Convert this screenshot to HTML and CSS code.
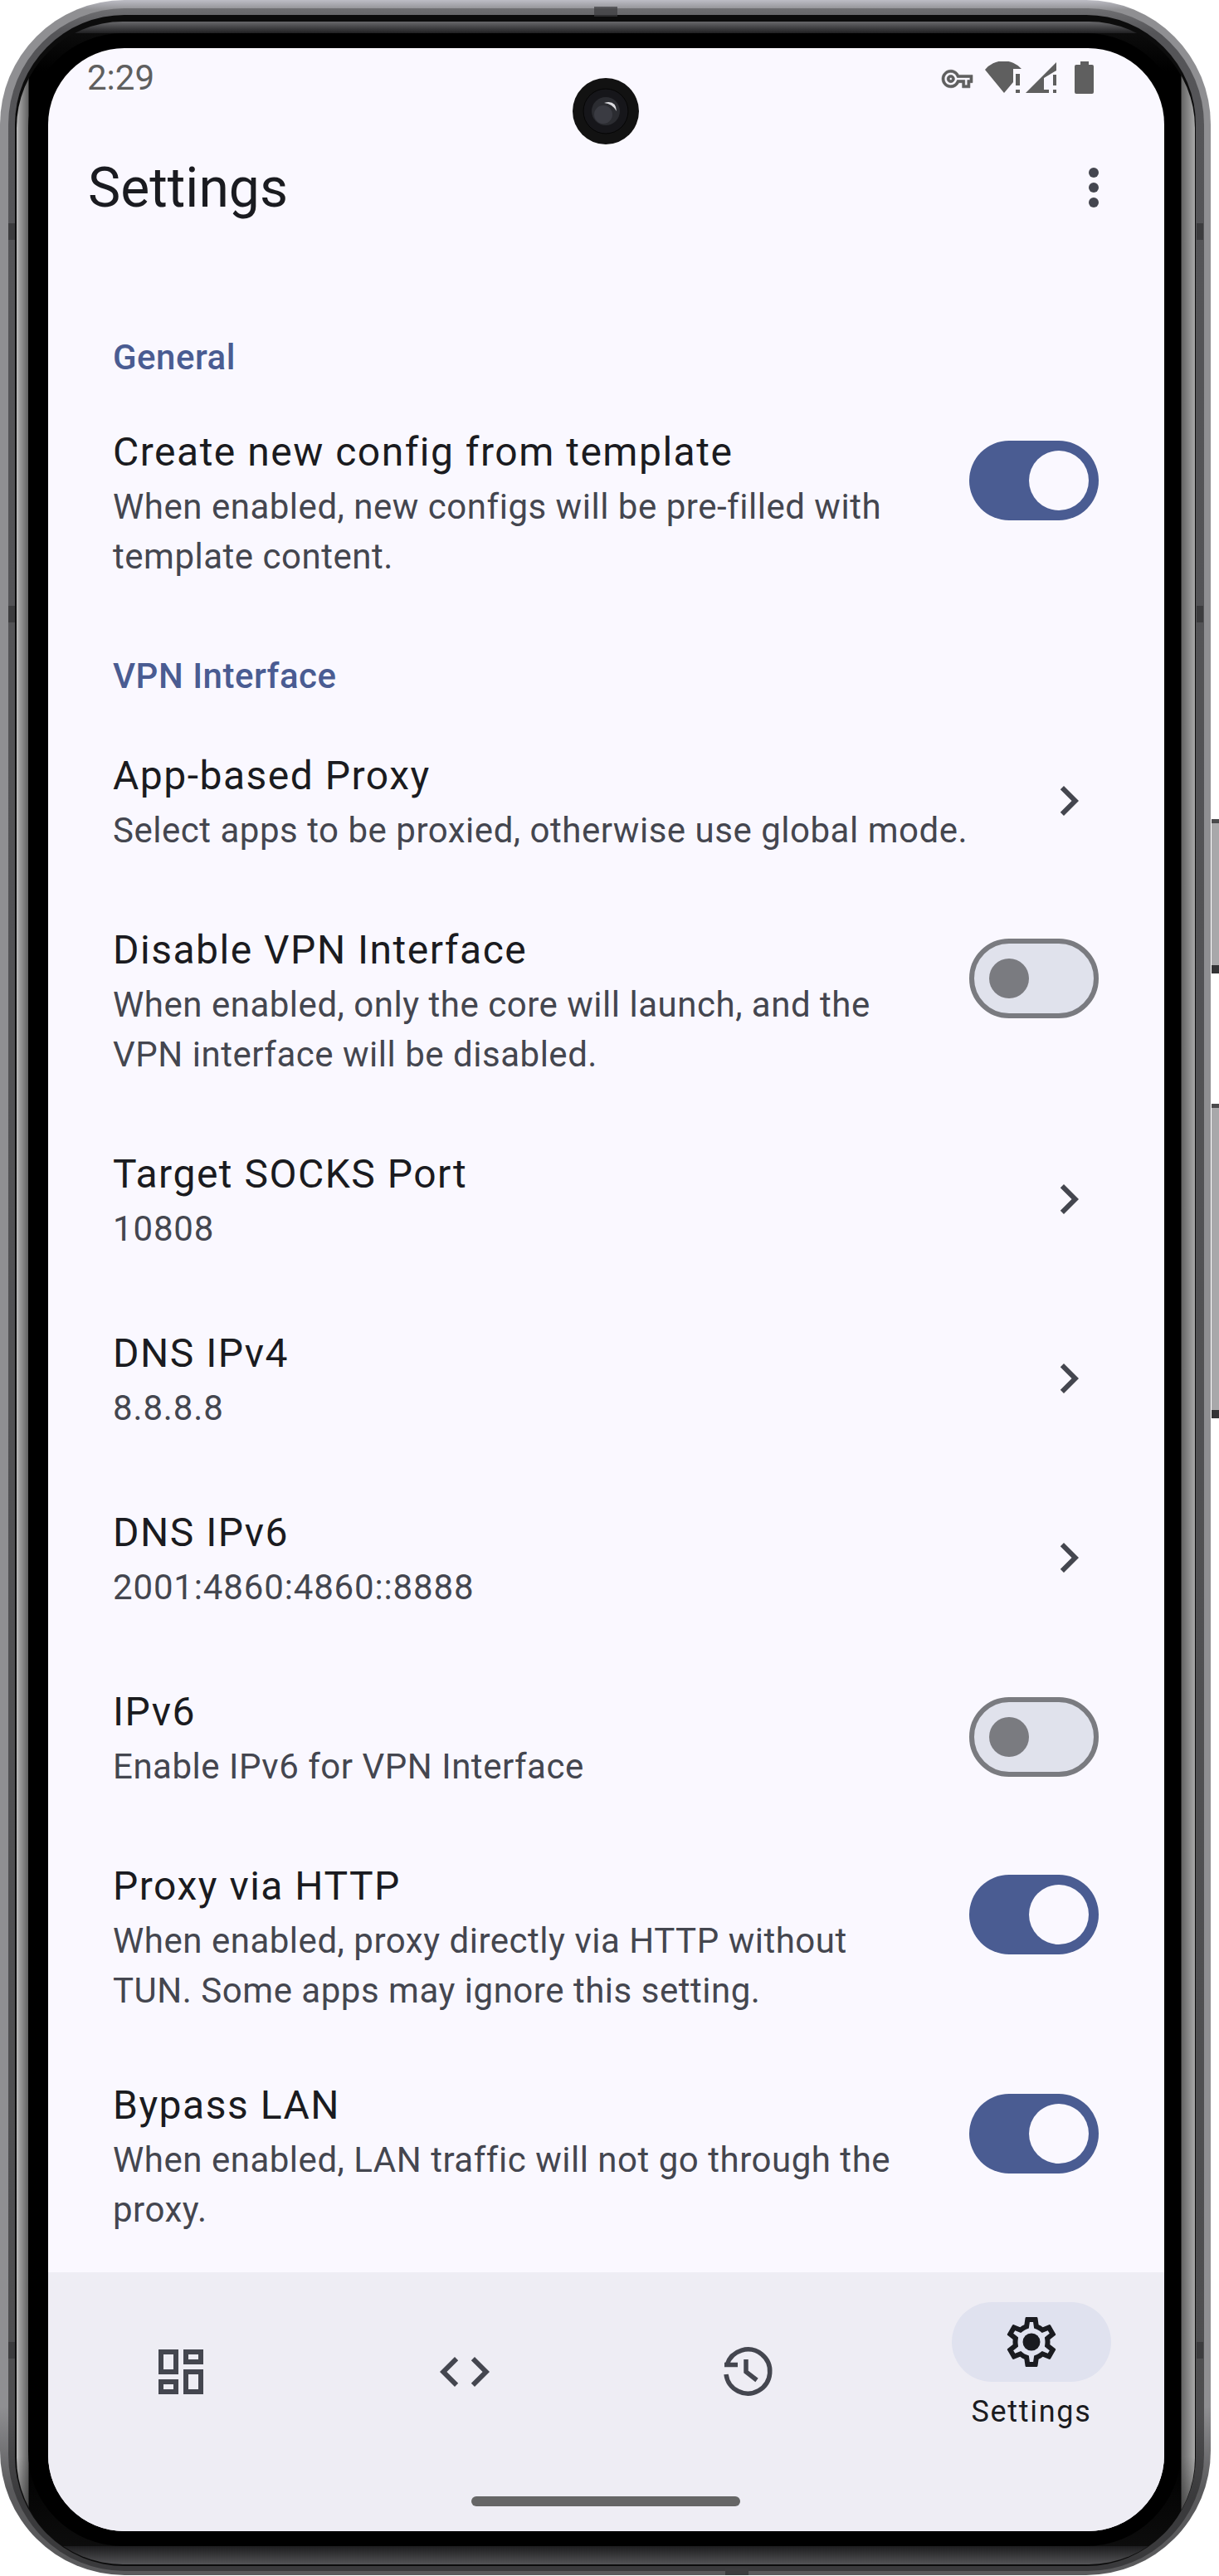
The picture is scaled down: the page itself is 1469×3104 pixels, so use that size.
FILE: index.html
```html
<!DOCTYPE html>
<html lang="en">
<head>
    <meta charset="UTF-8">
    <meta name="viewport" content="width=device-width, initial-scale=1.0">
    <title>Settings</title>
    <link rel="stylesheet" href="styles.css">
</head>
<body>
    <div class="side-button side-button-power"></div>
    <div class="side-button side-button-volume"></div>
    <div class="phone">
        <div class="ring-b">
            <div class="ring-c">
                <div class="ring-d">
                    <div class="bezel">
                        <div class="screen">
                            <svg class="camera" viewBox="0 0 80 80">
                                <circle cx="40" cy="40" r="40" fill="#121212"/>
                                <circle cx="40" cy="40" r="27" fill="#16161a" stroke="#050505" stroke-width="1"/>
                                <circle cx="40" cy="40" r="17" fill="#2b2c31"/>
                                <circle cx="37" cy="44" r="11" fill="#3a3b42"/>
                                <path d="M38 30Q52 26 53 40 48 31 38 30Z" fill="#dcdce0"/>
                            </svg>

                            <div class="status-bar">
                                <span class="status-time">2:29</span>
                                <div class="status-icons">
                                    <svg class="icon-key" viewBox="0 5 24 14"><path d="M22 19h-6v-4h-2.68c-1.14 2.42-3.6 4-6.32 4-3.86 0-7-3.14-7-7s3.14-7 7-7c2.72 0 5.17 1.58 6.32 4H24v6h-2v4zm-4-2h2v-4h2v-2H11.94l-.23-.67C11.01 8.34 9.11 7 7 7c-2.76 0-5 2.24-5 5s2.24 5 5 5c2.11 0 4.01-1.34 4.71-3.33l.23-.67H18v4zM7 15c-1.65 0-3-1.35-3-3s1.35-3 3-3 3 1.35 3 3-1.35 3-3 3zm0-4c-.55 0-1 .45-1 1s.45 1 1 1 1-.45 1-1-.45-1-1-1z"/></svg>
                                    <svg class="icon-wifi" viewBox="0 0 44 38"><path d="M0 10A29 29 0 0 1 44 9H34V25L23 38Z"/><path d="M37 15h5v14h-5zM37 34h5v4h-5z"/></svg>
                                    <svg class="icon-cell" viewBox="0 0 38 37"><path d="M0 37 37 0V10L22 19V33H28V37Z"/><path d="M33 15h4v13h-4zM33 33h4v4h-4z"/></svg>
                                    <svg class="icon-battery" viewBox="0 0 23 39"><path d="M7 0h10v4h4q2 0 2 2v31q0 2-2 2H2q-2 0-2-2V6q0-2 2-2h5z"/></svg>
                                </div>
                            </div>

                            <div class="top-bar">
                                <h1 class="top-title">Settings</h1>
                                <svg class="icon icon-more" viewBox="0 0 24 24"><circle cx="12" cy="6" r="2"/><circle cx="12" cy="12" r="2"/><circle cx="12" cy="18" r="2"/></svg>
                            </div>

                            <div class="settings-list">
                                <div class="section-label">General</div>
                                <div class="row row-three">
                                    <div class="row-text">
                                        <div class="row-title">Create new config from template</div>
                                        <div class="row-sub">When enabled, new configs will be pre-filled with template content.</div>
                                    </div>
                                    <div class="switch switch-on"><span class="thumb"></span></div>
                                </div>

                                <div class="section-label">VPN Interface</div>
                                <div class="row row-two">
                                    <div class="row-text">
                                        <div class="row-title">App-based Proxy</div>
                                        <div class="row-sub">Select apps to be proxied, otherwise use global mode.</div>
                                    </div>
                                    <svg class="icon" viewBox="0 0 24 24"><path d="M10 6L8.59 7.41 13.17 12l-4.58 4.59L10 18l6-6z"/></svg>
                                </div>
                                <div class="row row-three">
                                    <div class="row-text">
                                        <div class="row-title">Disable VPN Interface</div>
                                        <div class="row-sub">When enabled, only the core will launch, and the VPN interface will be disabled.</div>
                                    </div>
                                    <div class="switch switch-off"><span class="thumb"></span></div>
                                </div>
                                <div class="row row-two">
                                    <div class="row-text">
                                        <div class="row-title">Target SOCKS Port</div>
                                        <div class="row-sub row-value">10808</div>
                                    </div>
                                    <svg class="icon" viewBox="0 0 24 24"><path d="M10 6L8.59 7.41 13.17 12l-4.58 4.59L10 18l6-6z"/></svg>
                                </div>
                                <div class="row row-two">
                                    <div class="row-text">
                                        <div class="row-title">DNS IPv4</div>
                                        <div class="row-sub row-value">8.8.8.8</div>
                                    </div>
                                    <svg class="icon" viewBox="0 0 24 24"><path d="M10 6L8.59 7.41 13.17 12l-4.58 4.59L10 18l6-6z"/></svg>
                                </div>
                                <div class="row row-two">
                                    <div class="row-text">
                                        <div class="row-title">DNS IPv6</div>
                                        <div class="row-sub row-value">2001:4860:4860::8888</div>
                                    </div>
                                    <svg class="icon" viewBox="0 0 24 24"><path d="M10 6L8.59 7.41 13.17 12l-4.58 4.59L10 18l6-6z"/></svg>
                                </div>
                                <div class="row row-two">
                                    <div class="row-text">
                                        <div class="row-title">IPv6</div>
                                        <div class="row-sub">Enable IPv6 for VPN Interface</div>
                                    </div>
                                    <div class="switch switch-off switch-center"><span class="thumb"></span></div>
                                </div>
                                <div class="row row-three">
                                    <div class="row-text">
                                        <div class="row-title">Proxy via HTTP</div>
                                        <div class="row-sub">When enabled, proxy directly via HTTP without TUN. Some apps may ignore this setting.</div>
                                    </div>
                                    <div class="switch switch-on"><span class="thumb"></span></div>
                                </div>
                                <div class="row row-three">
                                    <div class="row-text">
                                        <div class="row-title">Bypass LAN</div>
                                        <div class="row-sub">When enabled, LAN traffic will not go through the proxy.</div>
                                    </div>
                                    <div class="switch switch-on"><span class="thumb"></span></div>
                                </div>
                            </div>

                            <div class="nav-bar">
                                <div class="nav-item">
                                    <svg class="icon" viewBox="0 0 24 24"><path d="M19 5v2h-4V5h4M9 5v6H5V5h4m10 8v6h-4v-6h4M9 17v2H5v-2h4M21 3h-8v6h8V3zM11 3H3v10h8V3zm10 8h-8v10h8V11zm-10 4H3v6h8v-6z"/></svg>
                                </div>
                                <div class="nav-item">
                                    <svg class="icon" viewBox="0 0 24 24"><path d="M9.4 16.6L4.8 12l4.6-4.6L8 6l-6 6 6 6 1.4-1.4zm5.2 0l4.6-4.6-4.6-4.6L16 6l6 6-6 6-1.4-1.4z"/></svg>
                                </div>
                                <div class="nav-item">
                                    <svg class="icon-history" viewBox="0 0 72 72">
                                        <path d="M10 39A26.5 26.5 0 1 0 11 27.5"/>
                                        <path d="M8 27.5H24M34 21V36L47 46"/>
                                    </svg>
                                </div>
                                <div class="nav-item nav-item-active">
                                    <div class="nav-pill">
                                        <svg class="icon icon-gear" viewBox="0 0 24 24"><path d="M19.43 12.98c.04-.32.07-.64.07-.98 0-.34-.03-.66-.07-.98l2.11-1.65c.19-.15.24-.42.12-.64l-2-3.46c-.09-.16-.26-.25-.44-.25-.06 0-.12.01-.17.03l-2.49 1c-.52-.4-1.08-.73-1.69-.98l-.38-2.65C14.46 2.18 14.25 2 14 2h-4c-.25 0-.46.18-.49.42l-.38 2.65c-.61.25-1.17.59-1.69.98l-2.49-1c-.06-.02-.12-.03-.18-.03-.17 0-.34.09-.43.25l-2 3.46c-.13.22-.07.49.12.64l2.11 1.65c-.04.32-.07.65-.07.98 0 .33.03.66.07.98l-2.11 1.65c-.19.15-.24.42-.12.64l2 3.46c.09.16.26.25.44.25.06 0 .12-.01.17-.03l2.49-1c.52.4 1.08.73 1.69.98l.38 2.65c.03.24.24.42.49.42h4c.25 0 .46-.18.49-.42l.38-2.65c.61-.25 1.17-.59 1.69-.98l2.49 1c.06.02.12.03.18.03.17 0 .34-.09.43-.25l2-3.46c.12-.22.07-.49-.12-.64l-2.11-1.65zm-1.98-1.71c.04.31.05.52.05.73 0 .21-.02.43-.05.73l-.14 1.13.89.7 1.08.84-.7 1.21-1.27-.51-1.04-.42-.9.68c-.43.32-.84.56-1.25.73l-1.06.43-.16 1.13-.2 1.35h-1.4l-.19-1.35-.16-1.13-1.06-.43c-.43-.18-.83-.41-1.23-.71l-.91-.7-1.06.43-1.27.51-.7-1.21 1.08-.84.89-.7-.14-1.13c-.03-.31-.05-.54-.05-.74s.02-.43.05-.73l.14-1.13-.89-.7-1.08-.84.7-1.21 1.27.51 1.04.42.9-.68c.43-.32.84-.56 1.25-.73l1.06-.43.16-1.13.2-1.35h1.39l.19 1.35.16 1.13 1.06.43c.43.18.83.41 1.23.71l.91.7 1.06-.43 1.27-.51.7 1.21-1.07.85-.89.7.14 1.13z"/><circle cx="12" cy="12" r="3.5"/></svg>
                                    </div>
                                    <span class="nav-label">Settings</span>
                                </div>
                                <div class="home-bar"></div>
                            </div>
                        </div>
                    </div>
                </div>
            </div>
        </div>
    </div>
    <div class="band band-left band-1"></div>
    <div class="band band-left band-2"></div>
    <div class="band band-left band-3"></div>
    <div class="band band-right band-1"></div>
    <div class="band band-right band-2"></div>
    <div class="band band-right band-3"></div>
    <div class="band band-top"></div>
    <div class="band band-bottom"></div>
</body>
</html>
```

FILE: styles.css
```css
body {
    margin: 0;
    width: 1469px;
    height: 3104px;
    overflow: hidden;
    position: relative;
    background: #ffffff;
    font-family: Roboto, "Noto Sans", sans-serif;
}

/* phone frame, outside to inside */
.phone {
    box-sizing: border-box;
    width: 1459px;
    height: 3103px;
    padding: 10px 8px 5px 10px;
    border-radius: 150px;
    background: linear-gradient(#bdbdc5 0, #8f8f92 12px, #8f8f92 2900px, #5a5a5c 3000px);
}
.ring-b {
    height: 100%;
    box-sizing: border-box;
    padding: 8px 10px 6px 8px;
    border-radius: 140px;
    background: linear-gradient(#6f6f72 0, #555558 30px, #4e4e50 2900px, #3a3a3c 3000px);
}
.ring-c {
    height: 100%;
    box-sizing: border-box;
    padding: 8px 1px 2px 2px;
    border-radius: 132px;
    background: #0c0c0c;
}
.ring-d {
    height: 100%;
    box-sizing: border-box;
    padding: 14px 17px 22px 14px;
    border-radius: 128px;
    background:
        linear-gradient(#68686b, #1f1f21) top / 100% 14px no-repeat,
        linear-gradient(#1c1c1e, #535356) bottom / 100% 22px no-repeat,
        linear-gradient(rgba(0, 0, 0, 0), rgba(20, 20, 20, 0.75)) bottom / 100% 130px no-repeat,
        linear-gradient(rgba(30, 30, 30, 0.5), rgba(0, 0, 0, 0)) top / 100% 60px no-repeat,
        linear-gradient(90deg, #bcbcbc 0, #9a9a9a 4px, #636363 14px, #000 15px, #000 calc(100% - 17px), #666 calc(100% - 16px), #a8a8a8 100%);
}
.bezel {
    height: 100%;
    box-sizing: border-box;
    padding: 18px 20px 18px 24px;
    border-radius: 114px;
    background: #000000;
}
.screen {
    position: relative;
    height: 100%;
    display: flex;
    flex-direction: column;
    border-radius: 92px;
    overflow: hidden;
    background: #faf8ff;
}
.side-button {
    position: absolute;
    left: 1460px;
    width: 9px;
    box-sizing: border-box;
    background: #a8a8aa;
    border-top: 5px solid #4a4a4c;
    border-bottom: 10px solid #333335;
}
.side-button-power {
    top: 987px;
    height: 186px;
}
.side-button-volume {
    top: 1330px;
    height: 379px;
}
/* antenna bands cut across the metal rim */
.band {
    position: absolute;
    background: #3c3c3e;
}
.band-left,
.band-right {
    width: 8px;
    height: 20px;
}
.band-left {
    left: 10px;
}
.band-right {
    left: 1442px;
}
.band-1 {
    top: 269px;
}
.band-2 {
    top: 730px;
}
.band-3 {
    top: 2822px;
}
.band-top {
    left: 716px;
    top: 8px;
    width: 28px;
    height: 12px;
    opacity: 0.7;
}
.band-bottom {
    left: 874px;
    top: 3095px;
    width: 28px;
    height: 8px;
}
.camera {
    position: absolute;
    left: 632px;
    top: 36px;
    width: 80px;
    height: 80px;
}

/* status bar */
.status-bar {
    height: 70px;
    flex-shrink: 0;
    display: flex;
    align-items: center;
    justify-content: space-between;
    padding: 0 85px 0 47px;
}
.status-time {
    font-size: 42px;
    color: #5f5f5f;
}
.status-icons {
    display: flex;
    align-items: center;
}
.status-icons svg {
    display: block;
    fill: #5f5f5f;
}
.icon-key {
    width: 37px;
    height: 22px;
    margin: 4px 15px 0 0;
    stroke: #5f5f5f;
    stroke-width: 0.4;
    overflow: visible;
}
.icon-wifi {
    width: 44px;
    height: 38px;
    margin-right: 5px;
}
.icon-cell {
    width: 38px;
    height: 37px;
    margin-right: 21px;
}
.icon-battery {
    width: 23px;
    height: 39px;
}

/* top app bar */
.top-bar {
    height: 196px;
    flex-shrink: 0;
    display: flex;
    align-items: center;
    justify-content: space-between;
    padding: 0 49px 0 48px;
}
.top-title {
    margin: 0;
    font-size: 66px;
    font-weight: 400;
    color: #1a1b20;
}
.icon {
    width: 72px;
    height: 72px;
    flex-shrink: 0;
    display: block;
    fill: #44464f;
}

/* list */
.settings-list {
    flex: 1;
    padding-top: 31px;
}
.section-label {
    padding: 48px 78px 12px;
    font-size: 42px;
    line-height: 60px;
    font-weight: 470;
    letter-spacing: 0.5px;
    color: #4a5c92;
}
.section-label:first-child {
    padding-top: 46px;
}
.row {
    box-sizing: border-box;
    display: flex;
    gap: 48px;
    padding-left: 78px;
    padding-right: 79px;
}
.row-two {
    height: 216px;
    align-items: center;
}
.row-three {
    height: 264px;
    padding-top: 36px;
    align-items: flex-start;
}
.row-text {
    flex: 1;
    min-width: 0;
}
.row-title {
    font-size: 48px;
    line-height: 72px;
    letter-spacing: 1.5px;
    color: #1a1b20;
}
.row-sub {
    font-size: 42px;
    line-height: 60px;
    letter-spacing: 0.52px;
    color: #44464f;
}
.row-value {
    letter-spacing: 0.85px;
}

/* switches */
.switch {
    box-sizing: border-box;
    width: 156px;
    height: 96px;
    flex-shrink: 0;
    margin-top: 22px;
    display: flex;
    align-items: center;
    border-radius: 48px;
}
.switch-center {
    margin-top: 0;
}
.thumb {
    display: block;
    border-radius: 50%;
}
.switch-on {
    justify-content: flex-end;
    padding-right: 12px;
    background: #4a5c92;
}
.switch-on .thumb {
    width: 72px;
    height: 72px;
    background: #faf8ff;
}
.switch-off {
    padding-left: 18px;
    background: #e0e2ec;
    border: 6px solid #7a7b80;
}
.switch-off .thumb {
    width: 48px;
    height: 48px;
    background: #7a7b80;
}

/* bottom navigation */
.nav-bar {
    position: relative;
    height: 312px;
    flex-shrink: 0;
    display: flex;
    justify-content: space-between;
    padding: 0 64px;
    background: #eeedf4;
}
.nav-item {
    width: 192px;
    box-sizing: border-box;
    padding-top: 84px;
    display: flex;
    flex-direction: column;
    align-items: center;
}
.nav-item-active {
    padding-top: 36px;
}
.nav-pill {
    width: 192px;
    height: 96px;
    display: flex;
    align-items: center;
    justify-content: center;
    border-radius: 48px;
    background: #e0e2ef;
}
.icon-gear {
    fill: #1a1b20;
}
.nav-label {
    margin-top: 12px;
    font-size: 36px;
    line-height: 48px;
    font-weight: 440;
    letter-spacing: 1.7px;
    color: #1a1b20;
}
.icon-history {
    width: 72px;
    height: 72px;
    display: block;
    fill: none;
    stroke: #44464f;
    stroke-width: 5.5;
}
.home-bar {
    position: absolute;
    left: 510px;
    bottom: 30px;
    width: 324px;
    height: 12px;
    border-radius: 6px;
    background: #666666;
}
```
